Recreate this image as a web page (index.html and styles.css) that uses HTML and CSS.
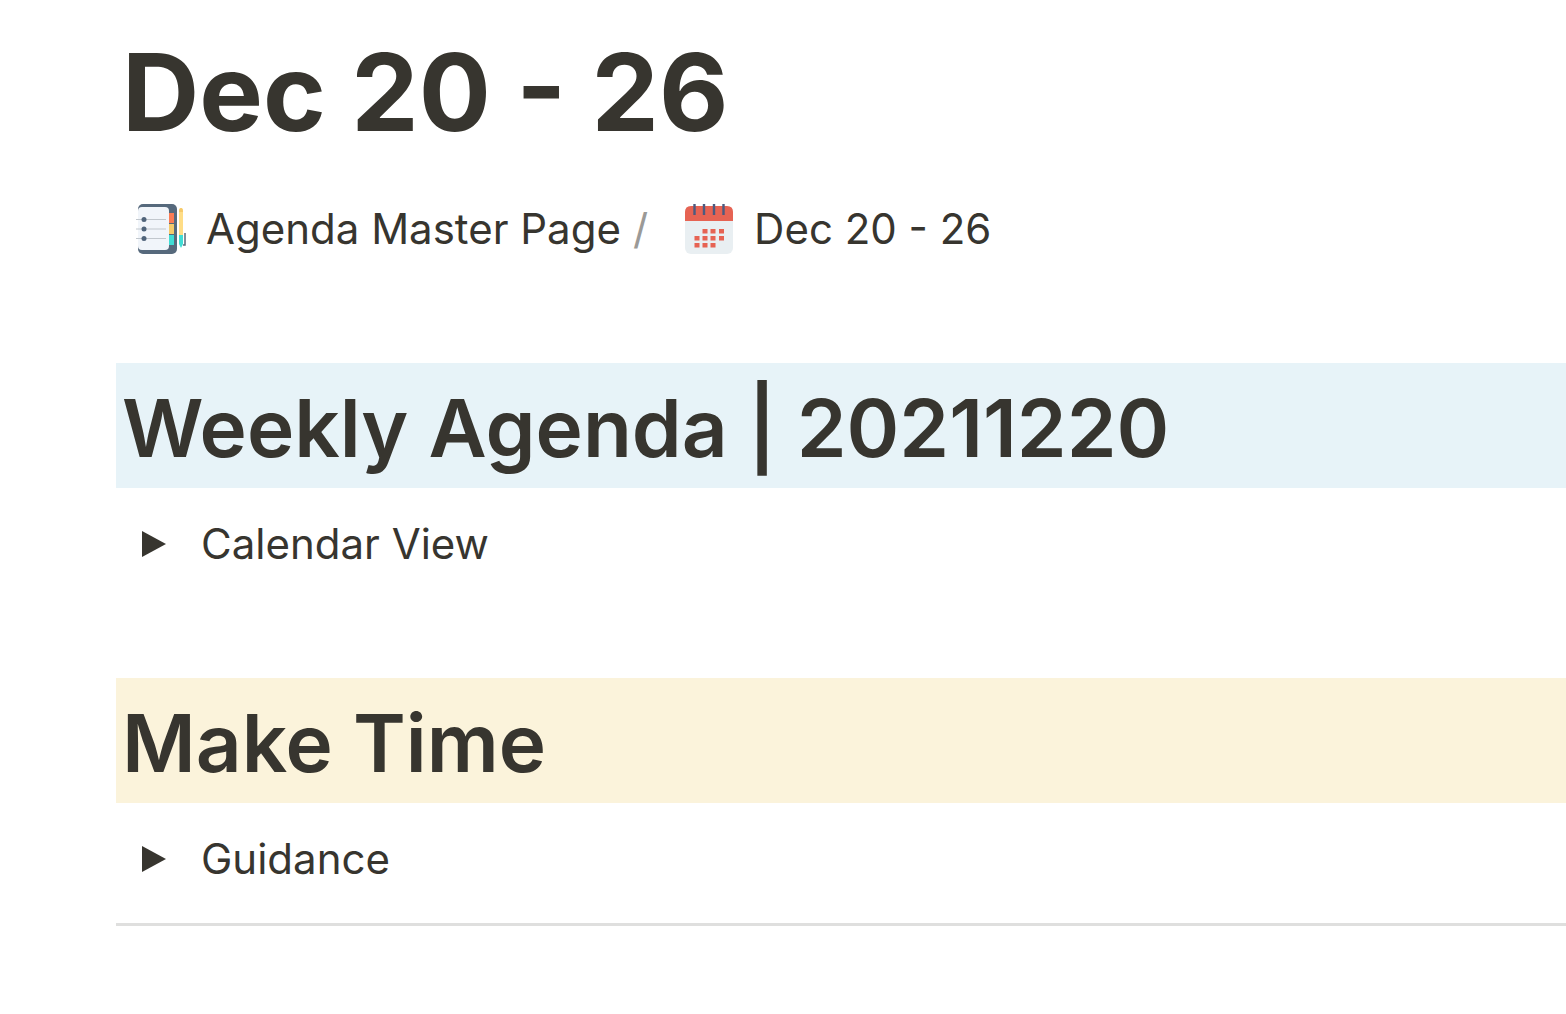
FILE: index.html
```html
<!DOCTYPE html>
<html lang="en">
<head>
<meta charset="utf-8">
<meta name="viewport" content="width=device-width, initial-scale=1">
<title>Dec 20 - 26</title>
<link rel="stylesheet" href="styles.css">
</head>
<body>
<main class="page">
  <h1 class="title">Dec 20 - 26</h1>

  <nav class="breadcrumb" aria-label="Breadcrumb">
    <a class="crumb" href="#agenda">
      <svg class="crumb-icon" viewBox="0 0 50 50" aria-hidden="true">
        <rect x="2" y="0" width="39" height="50" rx="5" fill="#56697c"/>
        <rect x="2" y="3" width="31" height="43" rx="4" fill="#f1f5fa"/>
        <rect x="33" y="9" width="5" height="10" fill="#fb7c55"/>
        <rect x="33" y="20" width="5" height="10" fill="#f5cb6b"/>
        <rect x="33" y="31" width="5" height="10" fill="#40ddd5"/>
        <path d="M0 15.500h8M0 25h8M0 34.500h8M8 15.500h22M8 25h22M8 34.500h22" stroke="#c1c7cd"/>
        <circle cx="8" cy="15.500" r="2.500" fill="#50647a"/>
        <circle cx="8" cy="25" r="2.500" fill="#50647a"/>
        <circle cx="8" cy="34.500" r="2.500" fill="#50647a"/>
        <path d="M43 7q0-3 2-3t2 3v24h-4z" fill="#ffdd86"/>
        <path d="M43 8q0-4 2-4t2 4z" fill="#f6c96a"/>
        <path d="M43 31h4v9l-2 4l-2-4z" fill="#40ddd5"/>
        <path d="M47 41h2V29" fill="none" stroke="#56697c" stroke-width="1.500"/>
      </svg>
      <span>Agenda Master Page</span>
    </a>
    <span class="separator" aria-hidden="true">/</span>
    <a class="crumb" href="#week" aria-current="page">
      <svg class="crumb-icon" viewBox="0 0 50 50" aria-hidden="true">
        <rect x="1" y="2" width="48" height="48" rx="6" fill="#e9eff2"/>
        <path d="M1 17V8q0-6 6-6h36q6 0 6 6v9z" fill="#e66353"/>
        <path d="M10.500 0v11M20 0v11M30 0v11M39.500 0v11" stroke="#4c5b80" stroke-width="2.400"/>
        <path d="M18.500 25h5v4.500h-5zM26.500 25h5v4.500h-5zM35 25h5v4.500h-5zM10.500 32h5v4.500h-5zM18.500 32h5v4.500h-5zM26.500 32h5v4.500h-5zM35 32h5v4.500h-5zM10.500 39h5v4.500h-5zM18.500 39h5v4.500h-5zM26.500 39h5v4.500h-5z" fill="#e66353"/>
      </svg>
      <span>Dec 20 - 26</span>
    </a>
  </nav>

  <section class="section">
    <h2 class="heading heading-blue">Weekly Agenda | 20211220</h2>
    <button class="toggle" type="button" aria-expanded="false">
      <svg class="arrow" viewBox="0 0 24 26" aria-hidden="true"><path d="M0 0L24 13L0 26z"/></svg>
      <span>Calendar View</span>
    </button>
  </section>

  <section class="section">
    <h2 class="heading heading-yellow">Make Time</h2>
    <button class="toggle" type="button" aria-expanded="false">
      <svg class="arrow" viewBox="0 0 24 26" aria-hidden="true"><path d="M0 0L24 13L0 26z"/></svg>
      <span>Guidance</span>
    </button>
  </section>

  <hr class="divider">
</main>
</body>
</html>
```

FILE: styles.css
```css
* {
  box-sizing: border-box;
}

body {
  margin: 0;
  background: #fff;
  color: #37352f;
  font-family: Inter, "Liberation Sans", sans-serif;
  font-size: 42px;
  line-height: 64px;
}

.page {
  padding: 27px 0 88px 116px;
}

.title {
  margin: 0 0 40px;
  padding-left: 6px;
  font-size: 107px;
  font-weight: 700;
  line-height: 130px;
}

.breadcrumb {
  display: flex;
  align-items: center;
  padding-left: 20px;
}

.crumb {
  display: flex;
  align-items: center;
  gap: 20px;
  color: inherit;
  text-decoration: none;
}

.crumb-icon {
  flex: none;
  width: 50px;
  height: 50px;
}

.separator {
  margin: 0 36px 0 12px;
  color: #9b9a97;
}

.section {
  margin-top: 102px;
}

.heading {
  margin: 0 0 24px;
  padding: 12px 6px 7px;
  font-size: 80px;
  font-weight: 600;
  line-height: 106px;
}

.heading-blue {
  background: #e7f3f8;
}

.heading-yellow {
  background: #fbf3db;
}

.toggle {
  display: flex;
  align-items: center;
  gap: 35px;
  margin: 0;
  padding: 0 0 0 26px;
  border: 0;
  background: none;
  color: inherit;
  font: inherit;
}

.arrow {
  flex: none;
  width: 24px;
  height: 26px;
  fill: currentColor;
}

.divider {
  height: 3px;
  margin: 32px 0 0;
  border: 0;
  background: #dfdfde;
}
```
